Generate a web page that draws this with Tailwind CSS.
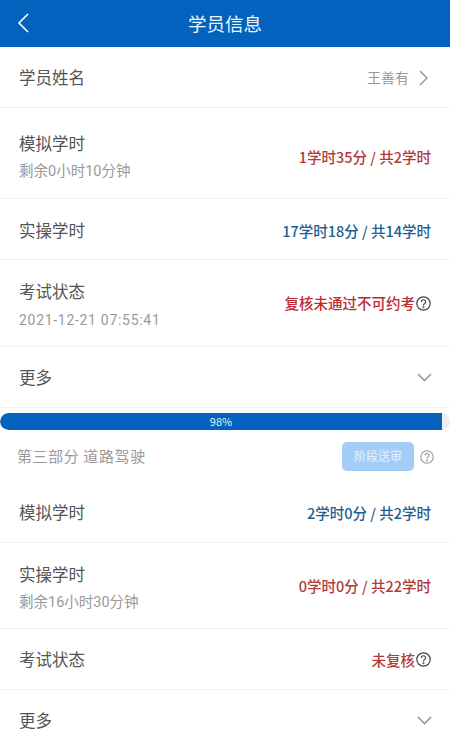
<!DOCTYPE html>
<html lang="zh-CN">
<head>
  <meta charset="UTF-8">
  <title>学员信息</title>
  <script src="https://cdn.jsdelivr.net/npm/@tailwindcss/browser@4"></script>
</head>
<body class="bg-white w-[450px] h-[750px] overflow-hidden font-['Noto_Sans_CJK_SC',sans-serif]">

  <!-- Header -->
  <header class="h-[47px] bg-[#0362bd] flex items-center relative">
    <svg class="absolute left-[16px] top-[13px] w-[14px] h-[20px]" viewBox="0 0 14 20" fill="none" stroke="#fff" stroke-width="1.6"><path d="M12 1 L3 10 L12 19"/></svg>
    <h1 class="w-full text-center text-[18.5px] text-[#eef5fb]">学员信息</h1>
  </header>

  <!-- Part two -->
  <div class="h-[61px] pt-[1px] flex items-center justify-between pl-[19px] pr-[22px] border-b border-[#f2f2f2]">
    <span class="text-[16.5px] text-[#555]">学员姓名</span>
    <div class="flex items-center gap-[10px]">
      <span class="text-[14px] text-[#999]">王善有</span>
      <svg class="w-[9px] h-[16px]" viewBox="0 0 9 16" fill="none" stroke="#999" stroke-width="1.5"><path d="M1 1 L8 8 L1 15"/></svg>
    </div>
  </div>

  <div class="h-[91px] pt-[8px] flex items-center justify-between px-[19px] border-b border-[#f2f2f2]">
    <div class="flex flex-col gap-[8px]">
      <span class="text-[16.5px] leading-[22px] text-[#555]">模拟学时</span>
      <span class="text-[14.5px] leading-[20px] text-[#999] font-['Roboto','Noto_Sans_CJK_SC',sans-serif]">剩余0小时10分钟</span>
    </div>
    <span class="text-[14.5px] font-medium text-[#b23a3a]">1学时35分 / 共2学时</span>
  </div>

  <div class="h-[61px] pt-[3px] flex items-center justify-between px-[19px] border-b border-[#f2f2f2]">
    <span class="text-[16.5px] text-[#555]">实操学时</span>
    <span class="text-[14.5px] font-medium text-[#1d6091]">17学时18分 / 共14学时</span>
  </div>

  <div class="h-[87px] flex items-center justify-between px-[19px] border-b border-[#f2f2f2]">
    <div class="flex flex-col gap-[8px] pt-[4px]">
      <span class="text-[16.5px] leading-[22px] text-[#555]">考试状态</span>
      <span class="text-[14px] leading-[20px] text-[#999] tracking-[0.7px] font-['Roboto',sans-serif]">2021-12-21 07:55:41</span>
    </div>
    <div class="flex items-center gap-[1px]">
      <span class="text-[14.5px] font-medium text-[#c0292d]">复核未通过不可约考</span>
      <svg class="w-[15px] h-[15px]" viewBox="0 0 15 15" fill="none" stroke="#444" stroke-width="1.2"><circle cx="7.5" cy="7.5" r="6.7"/><path d="M5.4 5.9 a2.1 2.1 0 1 1 3.3 1.7 c-.8.5-1.2.9-1.2 1.8"/><circle cx="7.5" cy="11.2" r=".4"/></svg>
    </div>
  </div>

  <div class="h-[61px] pt-[1px] flex items-center justify-between pl-[19px] pr-[18px] border-b border-[#f2f2f2]">
    <span class="text-[16.5px] text-[#555]">更多</span>
    <svg class="w-[15px] h-[9px]" viewBox="0 0 15 9" fill="none" stroke="#999" stroke-width="1.6"><path d="M1 1 L7.5 7.5 L14 1"/></svg>
  </div>

  <!-- Part three -->
  <div class="mt-[5px] h-[17px] bg-[#eeeeee] rounded-full overflow-hidden">
    <div class="w-[442px] h-full bg-[#0362bd] rounded-l-full text-center text-[11px] leading-[17px] text-[#e6f0fa]">98%</div>
  </div>

  <div class="h-[53px] flex items-center justify-between pl-[17px] pr-[16px]">
    <span class="text-[15px] text-[#999] tracking-[0.6px]">第三部分 道路驾驶</span>
    <div class="flex items-center gap-[6px]">
      <span class="w-[72px] h-[29px] rounded-[5px] bg-[#a3cdf7] text-[12px] font-medium leading-[27px] text-center text-[#dcecfc]">阶段送审</span>
      <svg class="w-[14px] h-[14px]" viewBox="0 0 15 15" fill="none" stroke="#999" stroke-width="1.2"><circle cx="7.5" cy="7.5" r="6.7"/><path d="M5.4 5.9 a2.1 2.1 0 1 1 3.3 1.7 c-.8.5-1.2.9-1.2 1.8"/><circle cx="7.5" cy="11.2" r=".4"/></svg>
    </div>
  </div>

  <div class="h-[60px] flex items-center justify-between px-[19px] border-b border-[#f2f2f2]">
    <span class="text-[16.5px] text-[#555]">模拟学时</span>
    <span class="text-[14.5px] font-medium text-[#1d6091]">2学时0分 / 共2学时</span>
  </div>

  <div class="h-[86px] flex items-center justify-between px-[19px] border-b border-[#f2f2f2]">
    <div class="flex flex-col gap-[8px] pt-[4px]">
      <span class="text-[16.5px] leading-[22px] text-[#555]">实操学时</span>
      <span class="text-[14.5px] leading-[20px] text-[#999] font-['Roboto','Noto_Sans_CJK_SC',sans-serif]">剩余16小时30分钟</span>
    </div>
    <span class="text-[14.5px] font-medium text-[#b23a3a]">0学时0分 / 共22学时</span>
  </div>

  <div class="h-[61px] pt-[1px] flex items-center justify-between px-[19px] border-b border-[#f2f2f2]">
    <span class="text-[16.5px] text-[#555]">考试状态</span>
    <div class="flex items-center gap-[1px]">
      <span class="text-[14.5px] font-medium text-[#b23a3a]">未复核</span>
      <svg class="w-[15px] h-[15px]" viewBox="0 0 15 15" fill="none" stroke="#444" stroke-width="1.2"><circle cx="7.5" cy="7.5" r="6.7"/><path d="M5.4 5.9 a2.1 2.1 0 1 1 3.3 1.7 c-.8.5-1.2.9-1.2 1.8"/><circle cx="7.5" cy="11.2" r=".4"/></svg>
    </div>
  </div>

  <div class="h-[61px] flex items-center justify-between pl-[19px] pr-[18px]">
    <span class="text-[16.5px] text-[#555]">更多</span>
    <svg class="w-[15px] h-[9px]" viewBox="0 0 15 9" fill="none" stroke="#999" stroke-width="1.6"><path d="M1 1 L7.5 7.5 L14 1"/></svg>
  </div>

</body>
</html>
